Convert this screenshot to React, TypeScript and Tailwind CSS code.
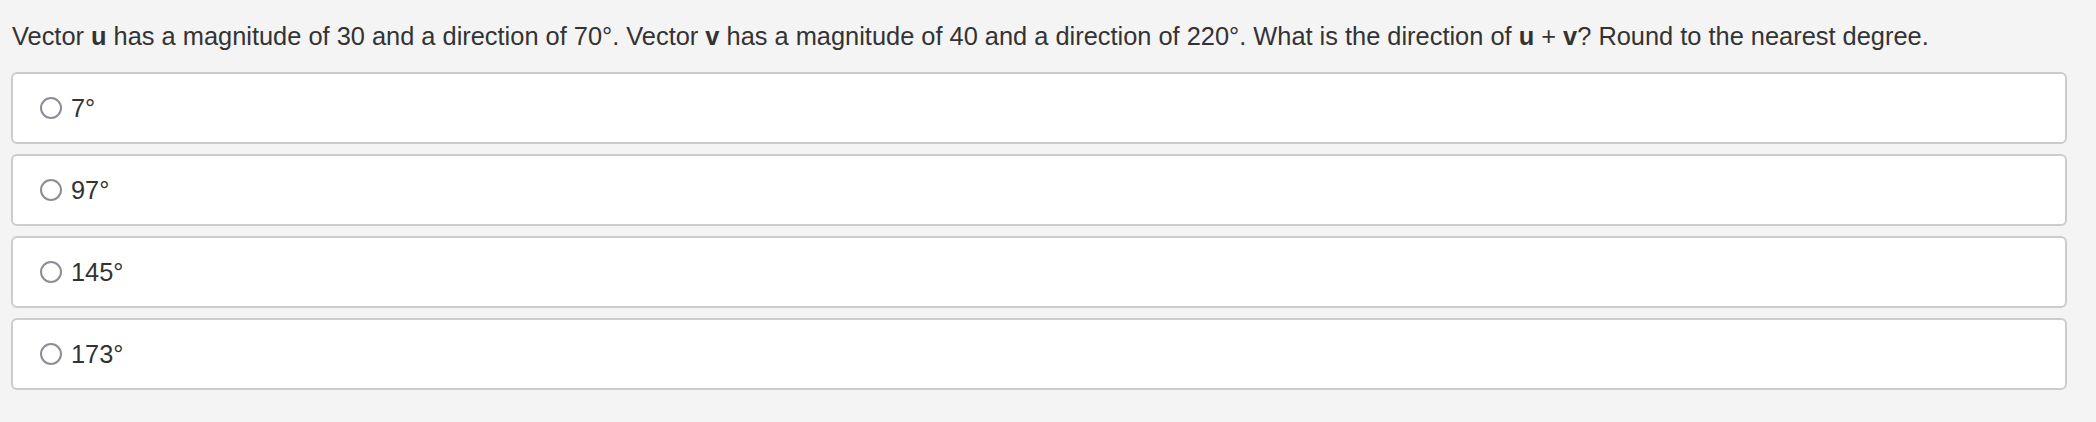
import React from "react";

const options = ["7°", "97°", "145°", "173°"];

export default function App() {
  return (
    <div
      className="w-[2096px] h-[422px] bg-[#f4f4f4] text-[#333333]"
      style={{ fontFamily: '"Liberation Sans", Arial, sans-serif' }}
    >
      <div className="pl-[12px] pr-[29px] pt-[20px]">
        <p className="text-[25.4px] leading-[32px] h-[32px] whitespace-nowrap">
          Vector <b>u</b> has a magnitude of 30 and a direction of 70°. Vector <b>v</b> has a magnitude of 40 and a
          direction of 220°. What is the direction of <b>u</b> + <b>v</b>? Round to the nearest degree.
        </p>
      </div>
      <div className="flex flex-col gap-[10px] pl-[11px] pr-[29px] mt-[20px]">
        {options.map((o) => (
          <label
            key={o}
            className="flex items-center h-[72px] bg-white border-2 border-[#cccccc] rounded-[6px] pl-[27px]"
          >
            <span className="w-[22px] h-[22px] rounded-full border-[2.5px] border-[#8e8c99] bg-white shrink-0" />
            <span className="ml-[9px] text-[25.4px] leading-[32px]">{o}</span>
          </label>
        ))}
      </div>
    </div>
  );
}
